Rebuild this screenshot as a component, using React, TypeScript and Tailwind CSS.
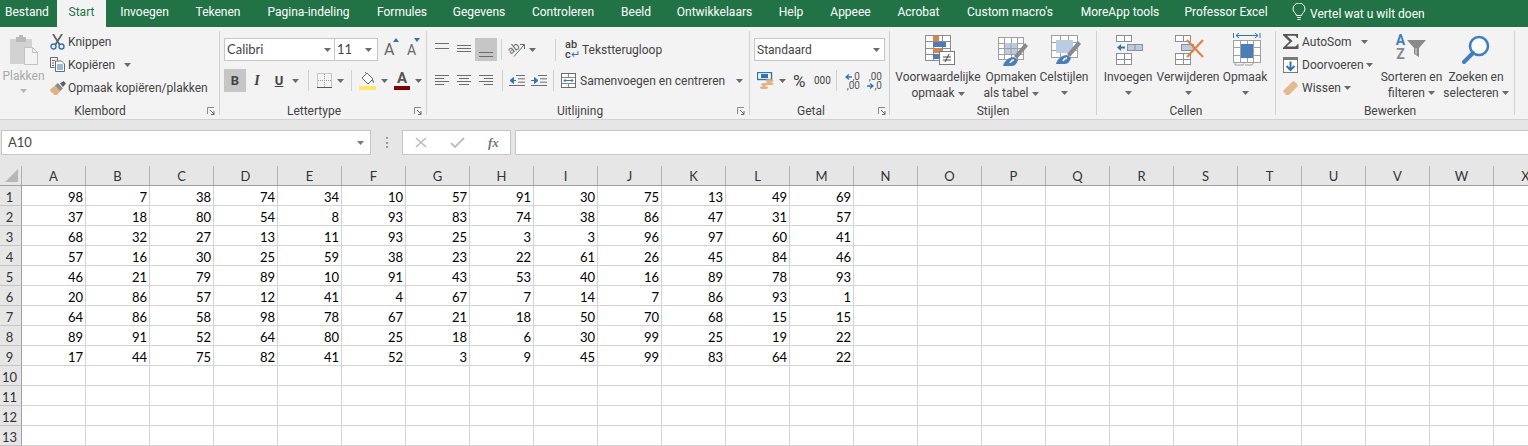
import React from "react";

const tabs: [string, string][] = [
  ["Bestand", "w-[57px] text-left pl-[5px]"],
  ["Start", "w-[49px] bg-[#f3f3f3] text-[#217346]"],
  ["Invoegen", "w-[77px]"],
  ["Tekenen", "w-[70px]"],
  ["Pagina-indeling", "w-[111px]"],
  ["Formules", "w-[76px]"],
  ["Gegevens", "w-[78px]"],
  ["Controleren", "w-[90px]"],
  ["Beeld", "w-[56px]"],
  ["Ontwikkelaars", "w-[101px]"],
  ["Help", "w-[52px]"],
  ["Appeee", "w-[67px]"],
  ["Acrobat", "w-[69px]"],
  ["Custom macro's", "w-[114px]"],
  ["MoreApp tools", "w-[106px]"],
  ["Professor Excel", "w-[106px]"],
];

const rows = [
  [98, 7, 38, 74, 34, 10, 57, 91, 30, 75, 13, 49, 69],
  [37, 18, 80, 54, 8, 93, 83, 74, 38, 86, 47, 31, 57],
  [68, 32, 27, 13, 11, 93, 25, 3, 3, 96, 97, 60, 41],
  [57, 16, 30, 25, 59, 38, 23, 22, 61, 26, 45, 84, 46],
  [46, 21, 79, 89, 10, 91, 43, 53, 40, 16, 89, 78, 93],
  [20, 86, 57, 12, 41, 4, 67, 7, 14, 7, 86, 93, 1],
  [64, 86, 58, 98, 78, 67, 21, 18, 50, 70, 68, 15, 15],
  [89, 91, 52, 64, 80, 25, 18, 6, 30, 99, 25, 19, 22],
  [17, 44, 75, 82, 41, 52, 3, 9, 45, 99, 83, 64, 22],
  [], [], [], [],
];
const cols = "ABCDEFGHIJKLMNOPQRSTUVWX".split("");

function Chev({ className = "", color = "#6a6a6a" }: { className?: string; color?: string }) {
  return (
    <svg width="7" height="4" viewBox="0 0 7 4" className={`shrink-0 ${className}`}>
      <path d="M0 0h7L3.5 4z" fill={color} />
    </svg>
  );
}

function Sep({ className = "h-[84px] mt-[4px]" }: { className?: string }) {
  return <div className={`w-px bg-[#d0d0d0] shrink-0 ${className}`} />;
}

function Launcher({ className = "" }: { className?: string }) {
  return (
    <svg width="8" height="8" viewBox="0 0 8 8" className={`shrink-0 ${className}`}>
      <path d="M.5 7V.5H7" fill="none" stroke="#8a8a8a" />
      <path d="M3 3l4 4M7 4v3.5H4" fill="none" stroke="#6a6a6a" />
    </svg>
  );
}

function Group({ width, label, labelWidth, launcher, children }: { width: string; label: string; labelWidth: string; launcher?: string; children: React.ReactNode }) {
  return (
    <section className={`flex flex-col shrink-0 ${width}`}>
      <div className="h-[76px] flex">{children}</div>
      <div className="h-4 flex items-center">
        <span className={`text-center leading-4 ${labelWidth}`}>{label}</span>
        {launcher && <Launcher className={launcher} />}
      </div>
    </section>
  );
}

function Lines({ rows: r, w = 14, h = 10, gap = 3 }: { rows: [number, number][]; w?: number; h?: number; gap?: number }) {
  return (
    <svg width={w} height={h} viewBox={`0 0 ${w} ${h}`} className="shrink-0 block">
      {r.map(([x, l], i) => (
        <rect key={i} x={x} y={i * gap} width={l} height="1" fill="#6d6d6d" />
      ))}
    </svg>
  );
}

function Large({ width, icon, lines, chevInline, iconClass = "h-[42px] pt-[6px]" }: { width: string; icon: React.ReactNode; lines: string[]; chevInline?: boolean; iconClass?: string }) {
  return (
    <div className={`flex flex-col items-center shrink-0 ${width}`}>
      <div className={`flex items-start justify-center ${iconClass}`}>{icon}</div>
      <div className="h-4 leading-4 whitespace-nowrap">{lines[0]}</div>
      <div className="h-4 leading-4 whitespace-nowrap flex items-center gap-[3px]">
        {lines[1] && <span>{lines[1]}</span>}
        <Chev className={chevInline ? "mt-px" : "mt-0"} />
      </div>
    </div>
  );
}

/* icons */
const Paste = () => (
  <svg width="28" height="31" viewBox="0 0 28 31">
    <rect x="0" y="4" width="22" height="25" rx="1" fill="#d2d2d2" />
    <rect x="6" y="2" width="10" height="5" fill="#b9b9b9" />
    <rect x="9" y="0" width="4" height="3" fill="#b9b9b9" />
    <path d="M14.5 12.5h8l5 5v12h-13z" fill="#f3f3f3" stroke="#c4c4c4" />
    <path d="M22.5 12.5v5h5" fill="none" stroke="#c4c4c4" />
  </svg>
);
const Scissors = () => (
  <svg width="15" height="16" viewBox="0 0 15 16">
    <path d="M3 0l6.5 10.5M12 0L5.5 10.5" stroke="#5f5f5f" strokeWidth="1.7" fill="none" />
    <circle cx="3.5" cy="12.5" r="2.5" fill="none" stroke="#2f75b5" strokeWidth="1.4" />
    <circle cx="11.5" cy="12.5" r="2.5" fill="none" stroke="#2f75b5" strokeWidth="1.4" />
  </svg>
);
const Copy = () => (
  <svg width="15" height="15" viewBox="0 0 15 15">
    <path d="M.5.5h7v3M.5.5v10h4" fill="none" stroke="#6a6a6a" />
    <path d="M2 3.5h3M2 6h2M2 8.5h2" stroke="#6a6a6a" />
    <path d="M5.5 4h6l3 3v7.5h-9z" fill="#fff" stroke="#6a6a6a" />
    <path d="M7 8h6M7 10h6M7 12h6" stroke="#2f75b5" />
  </svg>
);
const Painter = () => (
  <svg width="16" height="14" viewBox="0 0 16 14">
    <path d="M0 8.5l5-4 5.5 5.5L7 14H4l-1-2-2-.5z" fill="#e2b083" />
    <path d="M5 4.5l3-2.5 5 5.5-3 2.5z" fill="#8a8a8a" />
    <path d="M10 2.5L13.5 0 16 2.5l-3 3.5z" fill="#5f5f5f" />
  </svg>
);
const Borders = () => (
  <svg width="15" height="15" viewBox="0 0 15 15">
    <rect x=".5" y=".5" width="14" height="14" fill="none" stroke="#9a9a9a" strokeDasharray="1 1" />
    <path d="M7.5 1v13M1 7.5h13" stroke="#9a9a9a" strokeDasharray="1 1" />
    <path d="M0 14.5h15" stroke="#555" />
  </svg>
);
const Fill = () => (
  <svg width="17" height="19" viewBox="0 0 17 19">
    <path d="M3 7l5-5 6 6-5 5z" fill="#fff" stroke="#6a6a6a" />
    <path d="M6 1l2 2" stroke="#6a6a6a" />
    <path d="M13 8c1.5 1 2.5 3 1.5 4-.8-.4-1.5-2-1.5-4z" fill="#2f75b5" />
    <rect x="0" y="15" width="17" height="4" fill="#ffe866" />
  </svg>
);
const Orient = () => (
  <svg width="17" height="15" viewBox="0 0 17 15" overflow="visible">
    <text x="0" y="10" fontSize="11" fill="#6a6a6a" transform="rotate(-38 5 9)" fontFamily="Roboto">ab</text>
    <path d="M5 14.5L15 3M11 2.5h4.5V7" fill="none" stroke="#6a6a6a" />
  </svg>
);
const Outdent = () => (
  <svg width="16" height="11" viewBox="0 0 16 11">
    <path d="M7 .5h9M9 3.8h7M9 7.2h7M0 10.5h16" stroke="#6d6d6d" />
    <path d="M7 5.5H3M4.5 2.5L1 5.5l3.5 3z" fill="#2f75b5" stroke="#2f75b5" />
  </svg>
);
const Indent = () => (
  <svg width="16" height="11" viewBox="0 0 16 11">
    <path d="M7 .5h9M9 3.8h7M9 7.2h7M0 10.5h16" stroke="#6d6d6d" />
    <path d="M0 5.5h4M3.5 2.5l3.5 3-3.5 3z" fill="#2f75b5" stroke="#2f75b5" />
  </svg>
);
const Merge = () => (
  <svg width="15" height="15" viewBox="0 0 15 15">
    <rect x=".5" y=".5" width="14" height="14" fill="#fff" stroke="#6d6d6d" />
    <path d="M1 4.5h13M1 10.5h13M7.5 1v3M7.5 11v3" stroke="#8a8a8a" />
    <path d="M3 7.5h9M4.5 6L3 7.5 4.5 9M10.5 6L12 7.5 10.5 9" fill="none" stroke="#2f75b5" />
  </svg>
);
const Money = () => (
  <svg width="17" height="18" viewBox="0 0 17 18">
    <rect x=".5" y=".5" width="14" height="7" fill="#fff" stroke="#2f75b5" strokeWidth="1.4" />
    <rect x="4" y="2" width="7" height="4" fill="#2f75b5" />
    <ellipse cx="12.5" cy="8.5" rx="4" ry="1.6" fill="#e2b083" />
    <ellipse cx="12.5" cy="11.5" rx="4" ry="1.6" fill="#e2b083" />
    <ellipse cx="7" cy="15.5" rx="4" ry="1.6" fill="#e2b083" />
    <ellipse cx="7" cy="12.5" rx="3" ry="1.4" fill="#e2b083" />
  </svg>
);
const Grid = ({ x, y, w, h, nx, ny, stroke = "#8e8e8e" }: { x: number; y: number; w: number; h: number; nx: number; ny: number; stroke?: string }) => (
  <g fill="none" stroke={stroke}>
    <rect x={x + 0.5} y={y + 0.5} width={w} height={h} fill="#fff" />
    {Array.from({ length: nx - 1 }, (_, i) => (
      <path key={i} d={`M${Math.round(x + ((i + 1) * w) / nx) + 0.5} ${y}v${h}`} />
    ))}
    {Array.from({ length: ny - 1 }, (_, i) => (
      <path key={i} d={`M${x} ${Math.round(y + ((i + 1) * h) / ny) + 0.5}h${w}`} />
    ))}
  </g>
);
const CondFmt = () => (
  <svg width="31" height="30" viewBox="0 0 31 30">
    <Grid x={0} y={0} w={25} h={25} nx={3} ny={4} />
    <rect x="8" y="1" width="6" height="5" fill="#de8344" />
    <rect x="8" y="7" width="13" height="5" fill="#4a7ebb" />
    <rect x="8" y="13" width="9" height="5" fill="#de8344" />
    <rect x="8" y="19" width="6" height="5" fill="#4a7ebb" />
    <rect x="14.5" y="16.5" width="15" height="13" fill="#fff" stroke="#7a7a7a" />
    <path d="M18 22h8M18 25h8M24 19l-4 8" stroke="#444" fill="none" />
  </svg>
);
const Brush = () => (
  <g>
    <path d="M16 19L27 6l3 3-11 13z" fill="#8a8a8a" />
    <path d="M5 29c1-5 6-9 11-9l4 3c-1 3-3 6-6 6z" fill="#4a7ebb" />
    <path d="M12 26c1-2 2-3 4-3" fill="none" stroke="#fff" strokeWidth="1.4" />
  </g>
);
const TableFmt = () => (
  <svg width="31" height="29" viewBox="0 0 31 29">
    <Grid x={0} y={0} w={25} h={22} nx={4} ny={4} stroke="#a0a0a0" />
    <rect x="7" y="6" width="12" height="11" fill="#b8cce4" />
    <path d="M13 6v11M7 11.500h12" stroke="#a0a0a0" />
    <Brush />
  </svg>
);
const CellStyle = () => (
  <svg width="31" height="30" viewBox="0 0 31 30">
    <Grid x={0} y={0} w={26} h={22} nx={3} ny={3} stroke="#a0a0a0" />
    <rect x="5" y="5" width="17" height="13" fill="#b8cce4" />
    <Brush />
  </svg>
);
const InsertCells = () => (
  <svg width="27" height="30" viewBox="0 0 27 30">
    <Grid x={0} y={0} w={15} h={6} nx={2} ny={1} />
    <path d="M9 12.500H3" stroke="#2f75b5" strokeWidth="2" />
    <path d="M5 9l-4 3.500L5 16z" fill="#2f75b5" />
    <rect x="11.500" y="9.500" width="15" height="6" fill="#b8cce4" stroke="#8e8e8e" />
    <path d="M19 9.500v6" stroke="#8e8e8e" />
    <Grid x={0} y={18} w={15} h={11} nx={2} ny={2} />
  </svg>
);
const DeleteCells = () => (
  <svg width="30" height="30" viewBox="0 0 30 30">
    <Grid x={0} y={0} w={15} h={6} nx={2} ny={1} />
    <rect x="6.500" y="9.500" width="12" height="6" fill="#b8cce4" stroke="#8e8e8e" />
    <Grid x={0} y={18} w={15} h={11} nx={2} ny={2} />
    <path d="M12 5l16 17M28 5L12 22" stroke="#de8344" strokeWidth="2.2" fill="none" />
  </svg>
);
const FormatCells = () => (
  <svg width="28" height="34" viewBox="0 0 28 34">
    <path d="M.5 0v5M27 0v5" stroke="#2f75b5" />
    <path d="M3 2.500h22M6 0L3 2.500 6 5M22 0l3 2.500L22 5" fill="none" stroke="#2f75b5" />
    <Grid x={0} y={7} w={27} h={22} nx={4} ny={3} stroke="#a0a0a0" />
    <rect x="8" y="11" width="12" height="14" fill="#4a7ebb" />
    <path d="M2 29v3h8l2-3M12 32h7l2-3" fill="none" stroke="#a0a0a0" />
  </svg>
);
const Sigma = () => (
  <svg width="16" height="15" viewBox="0 0 16 15">
    <path d="M0 0h15v4h-1.200c-.4-1.600-1-2.200-3-2.200H4L9.500 7 3.500 12.500h7.500c2 0 2.700-.7 3.200-2.300H15.500V15H0v-1.200L6.500 7.600 0 1.200z" fill="#555" />
  </svg>
);
const FillDown = () => (
  <svg width="15" height="16" viewBox="0 0 15 16">
    <rect x=".5" y=".5" width="14" height="15" fill="#fff" stroke="#7a7a7a" />
    <rect x="0" y="0" width="15" height="3" fill="#7a7a7a" />
    <path d="M7.500 4.500v8M3.500 9l4 4 4-4" fill="none" stroke="#2f75b5" strokeWidth="2" />
  </svg>
);
const Eraser = () => (
  <svg width="15" height="14" viewBox="0 0 15 14">
    <path d="M0 10l9-9c1-1 2-1 3 0l2 2c1 1 1 2 0 3l-8 8H3z" fill="#e6b890" />
  </svg>
);
const Funnel = () => (
  <svg width="19" height="17" viewBox="0 0 19 17">
    <path d="M0 0h19l-7 8v9l-5-3V8z" fill="#8a8a8a" />
    <path d="M9 8v6.500" stroke="#f3f3f3" strokeWidth=".8" />
  </svg>
);
const Magnifier = () => (
  <svg width="28" height="29" viewBox="0 0 28 29">
    <circle cx="17" cy="11" r="9" fill="#fff" stroke="#3f7fbf" strokeWidth="2.6" />
    <path d="M11 18L2 27" stroke="#3f7fbf" strokeWidth="4" strokeLinecap="round" />
  </svg>
);
const Bulb = () => (
  <svg width="14" height="18" viewBox="0 0 14 18">
    <path d="M4.500 12.500C4 10 1 9 1 6a6 6 0 0 1 12 0c0 3-3 4-3.500 6.500z" fill="none" stroke="#fff" />
    <path d="M5 14.500h4M5.500 16.500h3" stroke="#fff" />
  </svg>
);
const ArrowL = () => (
  <svg width="7" height="6" viewBox="0 0 7 6" className="inline-block align-baseline"><path d="M7 3H2M4 .5L1 3l3 2.500" fill="none" stroke="#2f75b5" strokeWidth="1.300" /></svg>
);
const ArrowR = () => (
  <svg width="7" height="6" viewBox="0 0 7 6" className="inline-block align-baseline"><path d="M0 3h5M3 .5L6 3 3 5.500" fill="none" stroke="#2f75b5" strokeWidth="1.300" /></svg>
);

function Ribbon() {
  return (
    <div className="flex h-[93px] bg-[#f3f3f3] border-b border-[#d2d2d2] text-[#444]">
      <Group width="w-[219px]" label="Klembord" labelWidth="w-[200px]" launcher="ml-[7px]">
        <div className="w-[46px] flex flex-col items-center pt-[8px] pl-[1px] text-[#a9a9a9]">
          <Paste />
          <div className="leading-4 mt-[2px]">Plakken</div>
          <Chev className="mt-[5px]" color="#b5b5b5" />
        </div>
        <div className="flex flex-col pt-[3px] ml-[4px]">
          <div className="h-[23px] flex items-center"><span className="w-[18px]"><Scissors /></span>Knippen</div>
          <div className="h-[23px] flex items-center"><span className="w-[18px]"><Copy /></span>Kopiëren<Chev className="ml-[9px]" /></div>
          <div className="h-[23px] flex items-center"><span className="w-[18px]"><Painter /></span><span className="whitespace-nowrap">Opmaak kopiëren/plakken</span></div>
        </div>
      </Group>
      <Sep />
      <Group width="w-[206px]" label="Lettertype" labelWidth="w-[188px]" launcher="ml-[6px]">
        <div className="flex flex-col pl-[4px] pt-[11px]">
          <div className="flex items-center">
            <div className="w-[111px] h-[23px] bg-white border border-[#c6c6c6] flex items-center pl-[2px] pr-[3px] justify-between font-['Lato'] text-[13px]">Calibri<Chev /></div>
            <div className="w-[43px] h-[23px] bg-white border border-l-0 border-[#c6c6c6] flex items-center pl-[2px] pr-[5px] justify-between font-['Lato'] text-[13px]">11<Chev /></div>
            <div className="relative w-[15px] ml-[6px] text-[16px] leading-5 text-[#666]">A<svg width="6" height="4" viewBox="0 0 6 4" className="absolute -top-[2px] right-0"><path d="M0 4l3-4 3 4z" fill="#2f75b5" /></svg></div>
            <div className="relative w-[12px] ml-[8px] text-[14px] leading-5 text-[#666]">A<svg width="6" height="4" viewBox="0 0 6 4" className="absolute -top-[2px] -right-[1px]"><path d="M0 0l3 4 3-4z" fill="#2f75b5" /></svg></div>
          </div>
          <div className="flex items-center mt-[8px] h-[23px]">
            <div className="w-[22px] h-[23px] bg-[#c6c6c6] flex items-center justify-center font-bold text-[13px]">B</div>
            <div className="w-[22px] text-center italic font-['Liberation_Serif'] font-bold text-[14px]">I</div>
            <div className="w-[22px] text-center underline font-bold text-[13px]">U</div>
            <Chev className="ml-[2px]" />
            <Sep className="h-[21px] ml-[9px]" />
            <span className="ml-[8px]"><Borders /></span>
            <Chev className="ml-[5px]" />
            <Sep className="h-[21px] ml-[7px]" />
            <span className="ml-[7px]"><Fill /></span>
            <Chev className="ml-[5px]" />
            <div className="ml-[6px] flex flex-col items-center w-[16px]">
              <span className="font-bold text-[15px] leading-[15px] text-[#555]">A</span>
              <span className="w-[16px] h-[4px] bg-[#7f0000]" />
            </div>
            <Chev className="ml-[5px]" />
          </div>
        </div>
      </Group>
      <Sep />
      <Group width="w-[322px]" label="Uitlijning" labelWidth="w-[306px]" launcher="ml-[4px]">
        <div className="flex flex-col pl-[8px] pt-[11px]">
          <div className="flex h-[23px] items-center">
            <div className="w-[14px] -mt-[7px]"><Lines rows={[[0, 14], [0, 14]]} h={7} w={14} gap={5} /></div>
            <div className="w-[14px] ml-[8px]"><Lines rows={[[0, 14], [0, 14], [0, 14]]} h={9} /></div>
            <div className="w-[22px] h-[23px] ml-[4px] bg-[#c6c6c6] flex justify-center items-end pb-[3px]"><Lines rows={[[0, 14], [0, 14]]} h={6} gap={4} /></div>
            <Sep className="h-[21px] ml-[4px]" />
            <span className="ml-[7px] flex"><Orient /></span>
            <Chev className="ml-[3px]" />
            <Sep className="h-[22px] ml-[19px]" />
            <div className="ml-[9px] w-[13px] flex flex-col text-[11px] leading-[10px] font-medium">
              <span>ab</span><span>c<span className="text-[#2f75b5]">↵</span></span>
            </div>
            <span className="ml-[4px] whitespace-nowrap">Tekstterugloop</span>
          </div>
          <div className="flex h-[23px] items-center mt-[8px]">
            <Lines rows={[[0, 14], [0, 9], [0, 14], [0, 9]]} h={11} />
            <span className="ml-[8px]"><Lines rows={[[0, 14], [2, 10], [0, 14], [2, 10]]} h={11} /></span>
            <span className="ml-[8px]"><Lines rows={[[0, 14], [5, 9], [0, 14], [5, 9]]} h={11} /></span>
            <Sep className="h-[21px] ml-[9px]" />
            <span className="ml-[6px]"><Outdent /></span>
            <span className="ml-[6px]"><Indent /></span>
            <Sep className="h-[21px] ml-[6px]" />
            <span className="ml-[7px] flex"><Merge /></span>
            <span className="ml-[4px] w-[147px] whitespace-nowrap">Samenvoegen en centreren</span>
            <Chev className="ml-[9px]" />
          </div>
        </div>
      </Group>
      <Sep />
      <Group width="w-[139px]" label="Getal" labelWidth="w-[122px]" launcher="ml-[6px]">
        <div className="flex flex-col pl-[4px] pt-[11px]">
          <div className="w-[131px] h-[23px] bg-white border border-[#c6c6c6] flex items-center justify-between pl-[2px] pr-[4px] text-[12px]">Standaard<Chev /></div>
          <div className="flex h-[23px] items-center mt-[8px]">
            <span className="ml-[3px] flex"><Money /></span>
            <Chev className="ml-[5px]" />
            <span className="ml-[7px] text-[17px] leading-5 w-[15px]">%</span>
            <span className="ml-[6px] text-[10px] w-[15px]">000</span>
            <Sep className="h-[21px] ml-[7px]" />
            <div className="ml-[7px] w-[16px] text-[10px] leading-[9px] text-[#555] text-right whitespace-nowrap"><div><ArrowL />,0</div><div>,00</div></div>
            <div className="ml-[6px] w-[16px] text-[10px] leading-[9px] text-[#555] text-right whitespace-nowrap"><div>,00</div><div><ArrowR />,0</div></div>
          </div>
        </div>
      </Group>
      <Sep />
      <Group width="w-[206px]" label="Stijlen" labelWidth="w-[206px]">
        <Large width="w-[92px] ml-[2px]" icon={<CondFmt />} lines={["Voorwaardelijke", "opmaak"]} chevInline iconClass="h-[42px] pt-[8px] pl-[5px]" />
        <Large width="w-[54px]" icon={<TableFmt />} lines={["Opmaken", "als tabel"]} chevInline iconClass="h-[42px] pt-[10px] pl-[5px]" />
        <Large width="w-[52px]" icon={<CellStyle />} lines={["Celstijlen"]} iconClass="h-[42px] pt-[8px] pl-[4px]" />
      </Group>
      <Sep />
      <Group width="w-[178px]" label="Cellen" labelWidth="w-[178px]">
        <Large width="w-[58px] ml-[2px]" icon={<InsertCells />} lines={["Invoegen"]} iconClass="h-[42px] pt-[8px] pl-[2px]" />
        <Large width="w-[62px]" icon={<DeleteCells />} lines={["Verwijderen"]} iconClass="h-[42px] pt-[8px] pl-[4px]" />
        <Large width="w-[52px]" icon={<FormatCells />} lines={["Opmaak"]} iconClass="h-[42px] pt-[6px] pl-[3px]" />
      </Group>
      <Sep />
      <Group width="w-[238px]" label="Bewerken" labelWidth="w-[228px]">
        <div className="flex flex-col pt-[3px] pl-[7px] w-[103px] shrink-0">
          <div className="h-[23px] flex items-center"><span className="w-[19px] flex"><Sigma /></span>AutoSom<Chev className="ml-[9px]" /></div>
          <div className="h-[23px] flex items-center"><span className="w-[19px] flex"><FillDown /></span>Doorvoeren<Chev className="ml-[2px]" /></div>
          <div className="h-[23px] flex items-center"><span className="w-[19px] flex"><Eraser /></span>Wissen<Chev className="ml-[3px]" /></div>
        </div>
        <div className="w-[63px] ml-[1px] flex flex-col items-center shrink-0">
          <div className="h-[42px] pt-[6px] flex items-start pr-[3px]">
            <div className="flex flex-col w-[13px] font-bold text-[14px] leading-[14px] items-center"><span className="text-[#3f7fbf]">A</span><span className="text-[#8a8a8a]">Z</span></div>
            <span className="mt-[7px]"><Funnel /></span>
          </div>
          <div className="h-4 leading-4 whitespace-nowrap">Sorteren en</div>
          <div className="h-4 leading-4 flex items-center gap-[3px]">filteren<Chev /></div>
        </div>
        <div className="w-[62px] ml-[2px] flex flex-col items-center shrink-0">
          <div className="h-[42px] pt-[8px] flex items-start"><Magnifier /></div>
          <div className="h-4 leading-4 whitespace-nowrap">Zoeken en</div>
          <div className="h-4 leading-4 flex items-center gap-[3px]">selecteren<Chev /></div>
        </div>
      </Group>
      <Sep />
    </div>
  );
}

function FormulaBar() {
  return (
    <div className="flex h-[46px] bg-[#e6e6e6] pt-[10px] pl-px items-start">
      <div className="w-[370px] shrink-0 h-[25px] bg-white border border-[#c6c6c6] flex items-center justify-between pl-[6px] pr-[6px] text-[#444] font-['Lato'] text-[13px]">A10<Chev color="#7a7a7a" /></div>
      <div className="ml-[15px] mt-[7px] h-[11px] w-[2px] shrink-0 flex flex-col justify-between">
        <span className="w-[2px] h-[2px] bg-[#9a9a9a]" /><span className="w-[2px] h-[2px] bg-[#9a9a9a]" /><span className="w-[2px] h-[2px] bg-[#9a9a9a]" />
      </div>
      <div className="ml-[14px] w-[109px] h-[25px] bg-white border border-[#c6c6c6] flex items-center shrink-0">
        <svg width="13" height="11" viewBox="0 0 13 11" className="ml-[12px]"><path d="M1 1l10 9M11 1L1 10" stroke="#bdbdbd" strokeWidth="1.6" /></svg>
        <svg width="15" height="11" viewBox="0 0 15 11" className="ml-[22px]"><path d="M1 6l4 4 9-9" stroke="#bdbdbd" strokeWidth="1.8" fill="none" /></svg>
        <span className="ml-[23px] font-['Liberation_Serif'] italic font-bold text-[13px] text-[#777]">fx</span>
      </div>
      <div className="ml-[4px] w-[1020px] h-[25px] bg-white border border-[#c6c6c6] shrink-0" />
    </div>
  );
}

function Sheet() {
  return (
    <div className="font-['Lato'] text-[13px]">
      <div className="flex h-5 bg-[#e6e6e6] border-b border-[#a0a0a0] w-[1558px]">
        <div className="w-[22px] shrink-0 border-r border-[#b0b0b0] flex items-end justify-end pr-[3px] pb-[3px]">
          <svg width="13" height="13" viewBox="0 0 13 13"><path d="M13 0v13H0z" fill="#b7b7b7" /></svg>
        </div>
        {cols.map((c) => (
          <div key={c} className="w-16 shrink-0 border-r border-[#b0b0b0] text-center leading-[20px] text-[#333]">{c}</div>
        ))}
      </div>
      {rows.map((r, i) => (
        <div key={i} className="flex h-5 w-[1558px] bg-white">
          <div className="w-[22px] shrink-0 bg-[#e6e6e6] border-r border-b border-r-[#a0a0a0] border-b-[#c4c4c4] text-[#333] leading-[22px] text-center pr-[2px]">{i + 1}</div>
          {cols.map((c, j) => (
            <div key={c} className="w-16 shrink-0 border-r border-b border-[#d4d4d4] text-right pr-[2px] leading-[22px] text-black">{r[j] ?? ""}</div>
          ))}
        </div>
      ))}
    </div>
  );
}

export default function App() {
  return (
    <div className="w-[1528px] h-[446px] overflow-hidden bg-white font-['Roboto',sans-serif] text-[12px]">
      <div className="flex h-[27px] bg-[#217346] text-white">
        {tabs.map(([t, c]) => (
          <div key={t} className={`shrink-0 text-center leading-[25px] whitespace-nowrap ${c}`}>{t}</div>
        ))}
        <div className="flex items-start pt-[3px] ml-[13px]"><Bulb /><span className="ml-[4px] leading-[22px] whitespace-nowrap">Vertel wat u wilt doen</span></div>
      </div>
      <Ribbon />
      <FormulaBar />
      <Sheet />
    </div>
  );
}
